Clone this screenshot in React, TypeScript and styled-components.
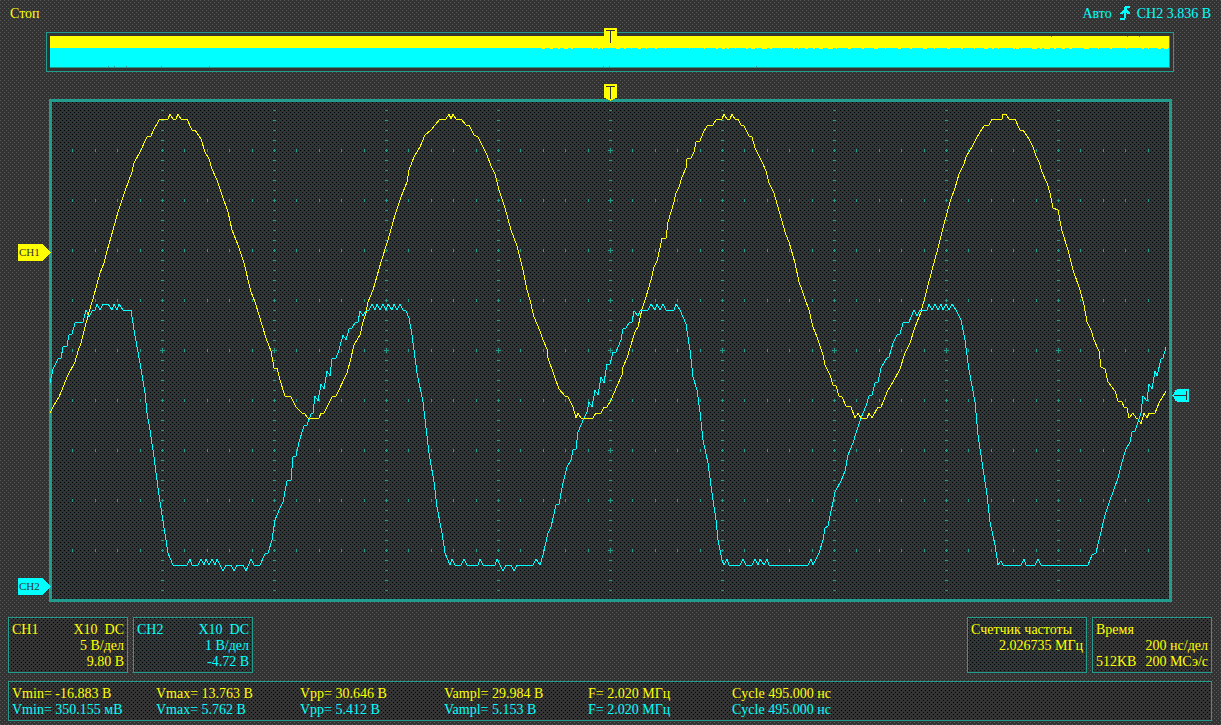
import React from 'react';
import styled, { createGlobalStyle } from 'styled-components';

const YELLOW = '#ffff00';
const CYAN = '#00ffff';
const TEAL = '#229c8c';
const DARK = '#333333';

const dots = (list: [number, number, string][]) =>
  `url("data:image/svg+xml,${encodeURIComponent(
    `<svg xmlns='http://www.w3.org/2000/svg' width='4' height='4' shape-rendering='crispEdges'>${list
      .map(([x, y, c]) => `<rect x='${x}' y='${y}' width='1' height='1' fill='${c}'/>`)
      .join('')}</svg>`,
  )}")`;

const PAGE_DOTS = dots([
  [0, 0, '#585858'],
  [2, 2, '#585858'],
]);
const SCREEN_DOTS = dots([
  [0, 0, '#000000'],
  [2, 2, '#060612'],
  [2, 0, '#2c3e3c'],
  [0, 2, '#2c3e3c'],
]);

const GlobalStyle = createGlobalStyle`
  * { box-sizing: border-box; }
  body {
    margin: 0;
    min-height: 100vh;
    background: ${DARK} ${PAGE_DOTS};
    font: 14px/16px "Liberation Serif", "Times New Roman", serif;
  }
`;

const Page = styled.main`
  display: flex;
  flex-direction: column;
  padding: 6px 9px 4px 8px;
`;

const TopBar = styled.header`
  display: flex;
  justify-content: space-between;
  padding: 0 1px 0 2px;
  height: 26px;
`;

const Status = styled.span<{ $color: string }>`
  display: flex;
  white-space: pre;
  color: ${(p) => p.$color};
`;

const EdgeIcon = styled.svg`
  width: 11px;
  height: 14px;
  margin: 0 6px 0 8px;
`;

const Overview = styled.section`
  position: relative;
  margin: 0 38px 27px;
  border: 1px solid ${TEAL};
  padding: 3px;
  background: ${DARK};
`;

const OverviewTrace = styled.svg`
  display: block;
  width: 100%;
  height: 32px;
`;

const OverviewMarker = styled.svg`
  position: absolute;
  left: calc(50% - 6px);
  top: -5px;
  width: 13px;
  height: 16px;
`;

const Screen = styled.section`
  margin: 0 40px 15px 41px;
  border: 3px solid ${TEAL};
  background: ${DARK} ${SCREEN_DOTS};
`;

const Scope = styled.svg`
  display: block;
  width: 100%;
  height: auto;
  overflow: visible;
`;

const Panels = styled.div`
  display: flex;
  gap: 5px;
  margin-bottom: 8px;
`;

const Panel = styled.section<{ $color: string; $end?: boolean }>`
  width: 120px;
  height: 56px;
  margin-left: ${(p) => (p.$end ? 'auto' : '0')};
  border: 1px solid ${TEAL};
  padding: 4px 3px 2px;
  background: ${DARK} ${SCREEN_DOTS};
  color: ${(p) => p.$color};
`;

const Line = styled.div<{ $right?: boolean }>`
  display: flex;
  justify-content: ${(p) => (p.$right ? 'flex-end' : 'space-between')};
  white-space: pre;
`;

const Measurements = styled.section`
  border: 1px solid ${TEAL};
  padding: 4px 3px 2px;
  background: ${DARK} ${SCREEN_DOTS};
`;

const MeasureTable = styled.table`
  border-collapse: collapse;
  table-layout: fixed;
  width: 864px;
  max-width: 100%;
`;

const MeasureRow = styled.tr<{ $color: string }>`
  color: ${(p) => p.$color};
`;

const MeasureCell = styled.td`
  padding: 0;
  white-space: nowrap;
`;

const CH1_TRACE =
  '50,413 53,407 59,397 68,375 75,362 78,351 81,343 83,335 89,312 93,299 100,273 104,263 107,251 113,230 118,212 124,194 129,180 132,172 134,163 140,152 147,137 151,136 153,131 159,120 168,119 170,114 173,119 176,119 178,114 181,119 187,119 192,130 195,130 201,139 205,152 209,159 212,169 217,180 222,195 228,212 232,230 238,245 244,263 251,292 255,302 266,338 271,351 274,368 277,368 280,380 285,396 291,397 296,407 302,413 304,413 308,418 319,418 321,413 324,413 332,397 336,396 347,373 351,358 354,345 360,335 363,322 366,313 368,302 373,290 381,262 388,240 395,215 401,197 407,182 409,170 414,157 420,147 425,135 431,130 435,125 440,119 446,119 449,114 451,119 453,114 456,119 461,119 466,125 469,125 474,135 478,137 482,145 487,155 491,166 495,174 499,190 505,208 511,230 517,246 523,270 527,290 530,300 534,317 540,331 543,340 547,349 548,358 554,375 559,389 565,396 568,397 573,407 576,418 578,413 581,418 593,418 596,413 601,413 604,407 607,407 611,400 617,386 622,375 623,367 627,358 630,348 635,332 638,327 642,309 646,297 651,280 654,267 657,261 660,248 662,238 666,238 668,222 671,212 674,202 676,193 679,187 682,177 686,168 687,159 691,158 694,152 696,142 700,141 703,133 707,126 713,125 716,120 722,119 724,114 727,119 730,119 732,114 735,119 738,119 741,125 744,126 749,136 752,137 755,148 762,162 766,171 769,183 774,193 778,207 786,235 789,242 795,263 799,282 802,290 805,299 809,310 813,327 817,337 823,355 825,365 830,375 833,385 836,386 839,396 842,397 846,406 851,407 855,418 858,413 861,418 867,418 869,413 872,418 878,407 881,407 888,390 893,382 900,369 905,353 910,343 915,327 921,312 926,293 932,270 938,248 944,224 950,202 955,188 959,174 964,164 966,157 972,147 976,139 980,132 984,126 989,125 992,119 1002,119 1003,114 1006,114 1009,119 1015,119 1020,130 1023,130 1029,139 1033,147 1036,156 1039,162 1042,172 1047,183 1050,193 1053,208 1058,210 1062,231 1068,250 1073,270 1080,290 1084,305 1087,322 1091,330 1094,340 1099,351 1101,367 1105,369 1108,382 1115,391 1118,401 1122,402 1124,407 1127,408 1129,418 1133,413 1136,418 1138,419 1141,424 1144,413 1147,418 1149,413 1155,413 1159,403 1166,391';

const CH2_TRACE =
  '50,383 53,369 58,359 61,358 63,347 67,346 69,335 72,334 75,323 83,322 86,310 89,317 92,311 95,310 97,304 100,310 103,304 108,304 112,310 114,304 117,310 119,304 123,310 131,310 134,330 137,347 140,363 145,393 147,413 150,430 154,457 158,488 162,515 166,540 168,553 173,565 187,565 190,559 192,565 198,565 201,559 204,565 206,559 209,565 212,559 215,565 217,559 223,571 226,565 231,565 234,571 237,565 243,565 246,571 251,559 254,565 260,565 265,554 268,553 272,540 275,520 280,508 283,502 287,481 291,480 293,457 296,456 299,442 304,426 307,425 311,414 313,413 315,396 318,401 321,384 324,389 327,371 330,376 332,359 336,358 339,350 343,335 346,340 349,329 352,328 355,323 358,322 360,311 363,316 366,311 369,310 372,304 375,310 377,304 380,310 383,304 386,310 388,304 392,310 394,304 397,310 400,304 403,310 406,311 409,318 412,335 414,350 417,373 423,402 426,428 429,453 434,482 437,507 442,533 445,553 450,565 452,559 455,565 461,565 464,559 467,565 478,565 480,559 483,565 495,565 497,559 503,571 506,565 511,565 514,571 517,565 533,565 536,559 540,565 543,555 548,533 551,527 556,505 559,504 563,483 567,467 571,460 573,450 576,449 578,432 584,418 587,412 589,402 592,407 595,390 598,395 601,377 604,383 607,364 610,364 613,352 616,352 621,340 623,329 626,328 629,323 632,322 634,311 638,316 640,311 648,310 651,304 655,310 657,304 660,310 663,304 666,310 674,310 676,304 680,310 686,324 690,350 693,377 697,390 700,412 703,440 708,463 712,493 716,520 718,540 722,560 724,565 727,559 729,565 740,565 743,559 746,565 752,565 755,559 758,565 760,559 764,565 767,559 769,565 808,565 811,559 813,565 819,553 823,540 825,528 828,526 835,492 841,481 845,471 848,455 853,443 857,430 861,418 866,406 869,396 872,395 875,383 878,382 881,368 887,358 889,357 893,343 897,335 900,334 903,323 909,322 914,310 917,316 920,310 927,310 929,304 932,310 935,304 938,310 941,304 943,310 946,304 949,310 952,304 956,310 961,320 965,340 969,370 975,402 978,435 982,462 987,495 990,522 995,545 998,565 1001,561 1003,565 1021,565 1024,559 1026,565 1035,565 1038,559 1041,565 1088,565 1092,555 1096,553 1099,540 1105,515 1110,500 1113,492 1118,478 1122,462 1126,449 1130,442 1132,432 1135,431 1138,422 1141,413 1143,396 1147,401 1149,384 1152,389 1155,371 1157,376 1161,359 1163,358 1166,347';

const COLUMNS = Array.from({ length: 9 }, (_, i) => 162 + i * 112);
const ROWS = Array.from({ length: 9 }, (_, i) => 150 + i * 50);

const gridPath = () => {
  const parts: string[] = [];
  for (const x of COLUMNS) {
    for (let y = 110; y <= 590; y += 10) parts.push(`M${x - 1} ${y}h3v1h-3z`);
  }
  for (const y of ROWS) {
    for (let i = 1; i < 50; i++) {
      const x = Math.round(50 + i * 22.4);
      parts.push(`M${x} ${y - 1}h1v3h-1z`);
    }
  }
  for (const x of COLUMNS) {
    for (const y of ROWS) {
      if (x === 610 || y === 350) parts.push(`M${x - 2} ${y}h5v1h-5z M${x} ${y - 2}h1v5h-1z`);
    }
  }
  return parts.join('');
};

const NOTCHES = [
  [492, 3], [500, 3], [508, 2], [514, 4], [521, 2], [542, 1], [548, 2], [552, 1], [566, 4],
  [574, 2], [581, 1], [588, 3], [596, 1], [605, 2], [615, 1], [639, 1], [654, 1], [666, 2],
  [672, 3], [677, 2], [685, 1], [696, 2], [701, 4], [707, 1], [712, 5], [720, 2], [731, 1],
  [743, 2], [748, 1], [755, 3], [763, 2], [769, 4], [778, 5], [786, 1], [798, 3], [812, 2],
  [824, 4], [835, 1], [848, 3], [860, 2], [873, 4], [884, 1], [897, 3], [911, 2], [924, 1],
  [934, 4], [942, 2], [948, 1], [963, 2], [966, 3], [971, 1], [982, 5], [990, 2], [994, 6],
  [1004, 2], [1012, 3], [1019, 3], [1034, 5], [1048, 1], [1060, 2], [1076, 1], [1092, 2],
  [1098, 1], [1108, 3], [1114, 4],
];

const MEASURES = [
  {
    color: YELLOW,
    values: ['Vmin= -16.883 B', 'Vmax= 13.763 B', 'Vpp= 30.646 B', 'Vampl= 29.984 B', 'F= 2.020 МГц', 'Cycle 495.000 нс'],
  },
  {
    color: CYAN,
    values: ['Vmin= 350.155 мВ', 'Vmax= 5.762 B', 'Vpp= 5.412 B', 'Vampl= 5.153 B', 'F= 2.020 МГц', 'Cycle 495.000 нс'],
  },
];

const ChannelTag = ({ y, color, label }: { y: number; color: string; label: string }) => (
  <g>
    <path d={`M18 ${y}h25l8 8.5l-8 8.5h-25z`} fill={color} shapeRendering="crispEdges" />
    <text x="19" y={y + 12} fontSize="11" fill={DARK}>
      {label}
    </text>
  </g>
);

export default function App() {
  return (
    <>
      <GlobalStyle />
      <Page>
        <TopBar>
          <Status $color={YELLOW}>Стоп</Status>
          <Status $color={CYAN}>
            Авто
            <EdgeIcon viewBox="0 0 11 14" shapeRendering="crispEdges" aria-hidden="true">
              <path d="M5 0h5v2h-3v2h1v1h1v1h1v2h-3v-1h-1v5h-1v2h-5v-2h4v-5h-1v1h-3v-1h1v-1h1v-1h1v-1h1v-3h1z" fill={CYAN} />
            </EdgeIcon>
            CH2 3.836 B
          </Status>
        </TopBar>

        <Overview>
          <OverviewTrace viewBox="0 0 1120 32" preserveAspectRatio="none" shapeRendering="crispEdges">
            <rect width="1120" height="32" fill={TEAL} />
            <rect width="1119" height="31" fill={CYAN} />
            <rect width="1119" height="12" fill={YELLOW} />
            {NOTCHES.map(([x, w]) => (
              <rect key={x} x={x} y="12" width={w} height="1" fill={YELLOW} />
            ))}
            {[58, 64, 76, 111, 159, 553, 559, 706].map((x) => (
              <rect key={x} x={x} y="30" width="1" height="1" fill={TEAL} />
            ))}
            {[1001, 1077, 1089].map((x) => (
              <rect key={x} x={x} width="1" height="1" fill={TEAL} />
            ))}
          </OverviewTrace>
          <OverviewMarker viewBox="0 0 13 16" shapeRendering="crispEdges">
            <rect width="13" height="16" fill={YELLOW} />
            <path d="M2 2h9v1h-4v12h-1v-12h-4z" fill={DARK} />
          </OverviewMarker>
        </Overview>

        <Screen>
          <Scope viewBox="52 102 1117 497">
            <path d={gridPath()} fill={TEAL} shapeRendering="crispEdges" />
            <g fill="none" strokeWidth="1" shapeRendering="crispEdges">
              <polyline points={CH1_TRACE} stroke={YELLOW} />
              <polyline points={CH2_TRACE} stroke={CYAN} />
            </g>
            <g shapeRendering="crispEdges">
              <path d="M604 84h13v14h-2v1h-2v1h-2v1h-1v-1h-2v-1h-2v-1h-2z" fill={YELLOW} />
              <path d="M606 86h9v1h-4v12h-1v-12h-4z" fill={DARK} />
              <path d="M1172 395h1v-1h1v-2h1v-2h2v-1h12v13h-12v-1h-2v-2h-1v-2h-1v-1h-1z" fill={CYAN} />
              <path d="M1174 395h12v-4h1v9h-1v-4h-12z" fill={DARK} />
            </g>
            <ChannelTag y={244} color={YELLOW} label="CH1" />
            <ChannelTag y={578} color={CYAN} label="CH2" />
          </Scope>
        </Screen>

        <Panels>
          <Panel $color={YELLOW}>
            <Line>
              <span>CH1</span>
              <span>X10{'  '}DC</span>
            </Line>
            <Line $right>5 В/дел</Line>
            <Line $right>9.80 B</Line>
          </Panel>
          <Panel $color={CYAN}>
            <Line>
              <span>CH2</span>
              <span>X10{'  '}DC</span>
            </Line>
            <Line $right>1 В/дел</Line>
            <Line $right>-4.72 B</Line>
          </Panel>
          <Panel $color={YELLOW} $end>
            <Line>Счетчик частоты</Line>
            <Line $right>2.026735 МГц</Line>
          </Panel>
          <Panel $color={YELLOW}>
            <Line>Время</Line>
            <Line $right>200 нс/дел</Line>
            <Line>
              <span>512KB</span>
              <span>200 МСэ/с</span>
            </Line>
          </Panel>
        </Panels>

        <Measurements>
          <MeasureTable>
            <tbody>
              {MEASURES.map((row) => (
                <MeasureRow key={row.color} $color={row.color}>
                  {row.values.map((value) => (
                    <MeasureCell key={value}>{value}</MeasureCell>
                  ))}
                </MeasureRow>
              ))}
            </tbody>
          </MeasureTable>
        </Measurements>
      </Page>
    </>
  );
}
